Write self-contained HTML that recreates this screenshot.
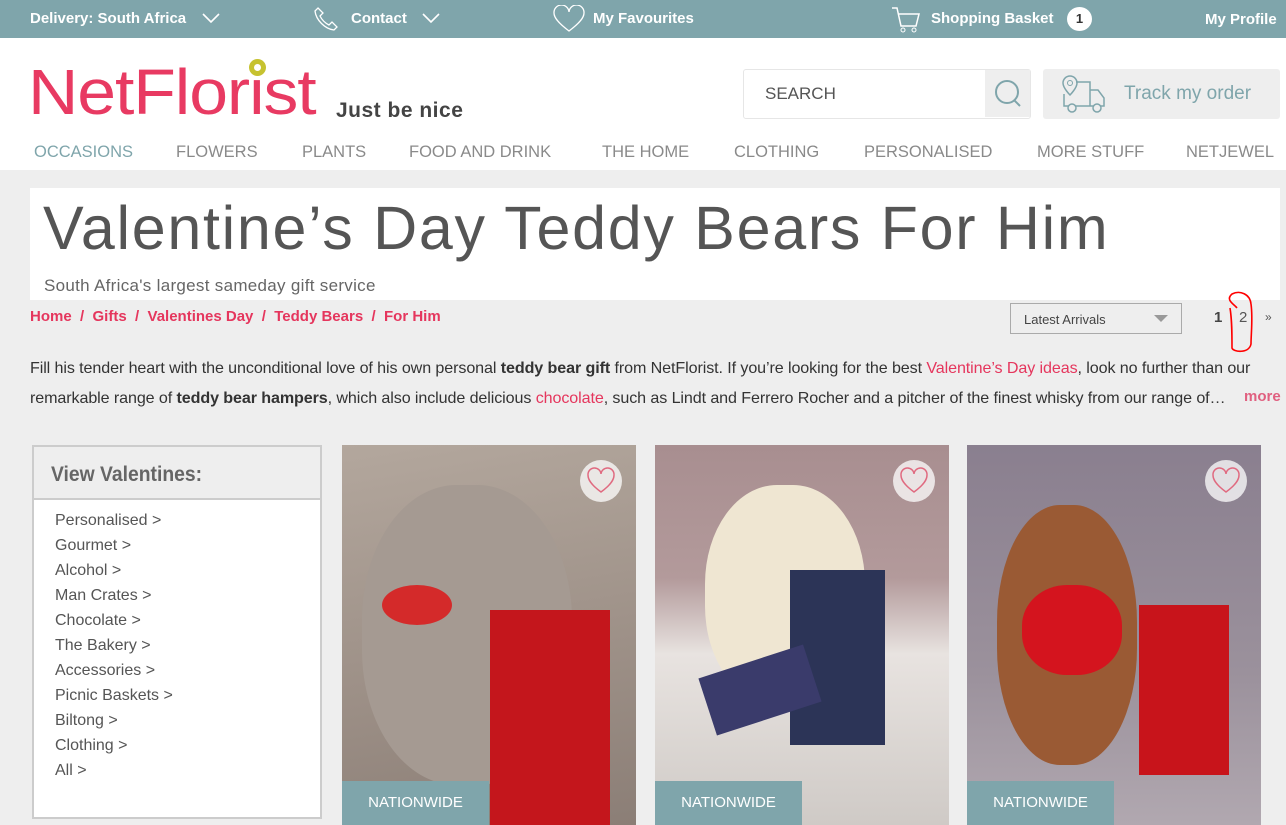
<!DOCTYPE html>
<html><head><meta charset="utf-8"><style>
*{margin:0;padding:0;box-sizing:border-box}
body{width:1286px;height:825px;overflow:hidden;background:#eeeeee;font-family:"Liberation Sans",sans-serif;position:relative}
.abs{position:absolute}
.top{left:0;top:0;width:1286px;height:38px;background:#7fa5ab;color:#fff;font-weight:bold;font-size:15px}
.top span{position:absolute;top:10px}
.hdr{left:0;top:38px;width:1286px;height:132px;background:#fff}
.nav{top:143px;font-size:16.5px;color:#8a8a8a}
.p{font-size:16.1px;color:#333;line-height:30px;letter-spacing:-0.1px}
.p b{color:#333}
.pk{color:#e5365d}
.side a{display:block;color:#555;font-size:16px;height:25px}
.card{top:445px;width:294px;height:380px;overflow:hidden}
.nw{position:absolute;left:0;bottom:0;width:147px;height:44px;background:#7fa5ab;color:#fff;font-size:15px;text-align:center;line-height:44px}
.hrt{position:absolute;top:15px;right:14px;width:42px;height:42px;border-radius:50%;background:rgba(255,255,255,.75)}
.hrt svg{position:absolute;left:6px;top:7px}
</style></head><body>
<div class="abs top">
<span style="left:30px">Delivery: South Africa</span>
<svg class="abs" style="left:202px;top:12px" width="18" height="12"><path d="M1 2l8 8 8-8" stroke="#fff" stroke-width="1.6" fill="none"/></svg>
<svg class="abs" style="left:312px;top:5px" width="28" height="28"><path d="M6 3l5 5-3 3c2 4 5 7 9 9l3-3 5 5-3 3C13 24 4 15 3 6z" stroke="#fff" stroke-width="1.3" fill="none"/></svg>
<span style="left:351px">Contact</span>
<svg class="abs" style="left:422px;top:12px" width="18" height="12"><path d="M1 2l8 8 8-8" stroke="#fff" stroke-width="1.6" fill="none"/></svg>
<svg class="abs" style="left:552px;top:5px" width="34" height="28"><path d="M17 26C5 17 2 12 2 8a7 7 0 0 1 15-1 7 7 0 0 1 15 1c0 4-3 9-15 18z" stroke="#fff" stroke-width="1.3" fill="none"/></svg>
<span style="left:593px">My Favourites</span>
<svg class="abs" style="left:890px;top:5px" width="32" height="30"><path d="M2 3h5l4 18h15l3-12H9" stroke="#fff" stroke-width="1.5" fill="none"/><circle cx="13" cy="25" r="2" stroke="#fff" fill="none"/><circle cx="24" cy="25" r="2" stroke="#fff" fill="none"/></svg>
<span style="left:931px">Shopping Basket</span>
<div class="abs" style="left:1067px;top:7px;width:25px;height:24px;border-radius:50%;background:#fff;color:#333;font-size:13px;text-align:center;line-height:24px">1</div>
<span style="left:1205px;top:11px">My Profile</span>
</div>
<div class="abs hdr"></div>
<div class="abs" style="left:28px;top:52px;font-size:64px;color:#e83a62;letter-spacing:-1px;line-height:80px;transform:scaleX(1.09);transform-origin:left">NetFlorist</div>
<div class="abs" style="left:249px;top:59px;width:17px;height:17px;border-radius:50%;background:#c6c230"></div>
<div class="abs" style="left:254px;top:64px;width:7px;height:7px;border-radius:50%;background:#fff"></div>
<div class="abs" style="left:336px;top:99px;font-size:21px;color:#444;font-weight:bold;letter-spacing:0.5px">Just be nice</div>
<div class="abs" style="left:743px;top:69px;width:288px;height:50px;border:1px solid #e6e6e6;border-radius:3px;background:#fff"></div>
<div class="abs" style="left:765px;top:84px;font-size:17px;color:#555">SEARCH</div>
<div class="abs" style="left:985px;top:70px;width:45px;height:47px;background:#eee"></div>
<svg class="abs" style="left:993px;top:78px" width="32" height="32"><circle cx="14" cy="14" r="11" stroke="#7fa5ab" stroke-width="2" fill="none"/><path d="M21 22l6 6" stroke="#7fa5ab" stroke-width="2"/></svg>
<div class="abs" style="left:1043px;top:69px;width:237px;height:50px;background:#eeeeee;border-radius:3px"></div>
<svg class="abs" style="left:1060px;top:74px" width="52" height="40"><path d="M10 2a7 7 0 0 1 7 7c0 5-7 12-7 12S3 14 3 9a7 7 0 0 1 7-7z" stroke="#7fa5ab" stroke-width="1.5" fill="none"/><circle cx="10" cy="9" r="2.5" stroke="#7fa5ab" fill="none"/><path d="M16 8h14v24H4V20M30 16h8l6 8v8h-14" stroke="#7fa5ab" stroke-width="1.5" fill="none"/><circle cx="12" cy="34" r="4" fill="#eee" stroke="#7fa5ab" stroke-width="1.5"/><circle cx="37" cy="34" r="4" fill="#eee" stroke="#7fa5ab" stroke-width="1.5"/></svg>
<div class="abs" style="left:1124px;top:83px;font-size:19px;color:#7fa5ab">Track my order</div>
<div class="abs nav" style="left:34px;color:#7fa5ab">OCCASIONS</div>
<div class="abs nav" style="left:176px">FLOWERS</div>
<div class="abs nav" style="left:302px">PLANTS</div>
<div class="abs nav" style="left:409px">FOOD AND DRINK</div>
<div class="abs nav" style="left:602px">THE HOME</div>
<div class="abs nav" style="left:734px">CLOTHING</div>
<div class="abs nav" style="left:864px">PERSONALISED</div>
<div class="abs nav" style="left:1037px">MORE STUFF</div>
<div class="abs nav" style="left:1186px">NETJEWEL</div>

<div class="abs" style="left:30px;top:188px;width:1250px;height:112px;background:#fff"></div>
<div class="abs" style="left:43px;top:193px;font-size:61px;color:#555;letter-spacing:1.7px">Valentine’s Day Teddy Bears For Him</div>
<div class="abs" style="left:44px;top:276px;font-size:17px;color:#666;letter-spacing:0.3px">South Africa's largest sameday gift service</div>

<div class="abs" style="left:30px;top:308px;font-size:15px;color:#e5365d;font-weight:bold">Home &nbsp;/&nbsp; Gifts &nbsp;/&nbsp; Valentines Day &nbsp;/&nbsp; Teddy Bears &nbsp;/&nbsp; For Him</div>
<div class="abs" style="left:1010px;top:303px;width:172px;height:31px;border:1px solid #aaa;background:#eee;font-size:13px;color:#444;padding:8px 13px">Latest Arrivals</div>
<div class="abs" style="left:1154px;top:315px;border-left:7px solid transparent;border-right:7px solid transparent;border-top:7px solid #999"></div>
<div class="abs" style="left:1214px;top:309px;font-size:15px;color:#444;font-weight:bold">1</div>
<div class="abs" style="left:1239px;top:309px;font-size:15px;color:#555">2</div>
<div class="abs" style="left:1265px;top:310px;font-size:12px;color:#555">»</div>
<svg class="abs" style="left:1215px;top:275px" width="50" height="85"><path d="M22 33c-3-4-12-8-5-14 8-4 18 0 19 10 2 14 0 30 0 40-2 10-18 8-19 4 0-14 0-28-2-40" stroke="#f00" stroke-width="1.6" fill="none"/></svg>

<div class="abs p" style="left:30px;top:353px;width:1256px;white-space:nowrap">Fill his tender heart with the unconditional love of his own personal <b>teddy bear gift</b> from NetFlorist. If you’re looking for the best <span class="pk">Valentine’s Day ideas</span>, look no further than our<br>remarkable range of <b>teddy bear hampers</b>, which also include delicious <span class="pk">chocolate</span>, such as Lindt and Ferrero Rocher and a pitcher of the finest whisky from our range of…</div>
<div class="abs" style="left:1240px;top:388px;font-size:15px;color:#e06080;font-weight:bold;background:#eee;padding-left:4px">more</div>

<div class="abs" style="left:32px;top:445px;width:290px;height:374px;border:2px solid #ccc;background:#fff"></div>
<div class="abs" style="left:34px;top:447px;width:286px;height:53px;background:#eee;border-bottom:2px solid #ccc"></div>
<div class="abs" style="left:51px;top:463px;font-size:21px;color:#666;font-weight:bold;transform:scaleX(.92);transform-origin:left">View Valentines:</div>
<div class="abs side" style="left:55px;top:512px">
<a>Personalised &gt;</a><a>Gourmet &gt;</a><a>Alcohol &gt;</a><a>Man Crates &gt;</a><a>Chocolate &gt;</a><a>The Bakery &gt;</a><a>Accessories &gt;</a><a>Picnic Baskets &gt;</a><a>Biltong &gt;</a><a>Clothing &gt;</a><a>All &gt;</a></div>

<div class="abs card" style="left:342px;background:linear-gradient(170deg,#b3a79d,#9c8f86 60%,#8b7e76)">
<div class="abs" style="left:20px;top:40px;width:210px;height:300px;border-radius:45%;background:#a59a92"></div>
<div class="abs" style="left:148px;top:165px;width:120px;height:215px;background:#c4161c"></div>
<div class="abs" style="left:40px;top:140px;width:70px;height:40px;border-radius:50%;background:#d42a2a"></div>
<div class="hrt"><svg width="30" height="28"><path d="M15 25C4 17 2 12 2 8a6.5 6.5 0 0 1 13-1 6.5 6.5 0 0 1 13 1c0 4-2 9-13 17z" stroke="#e06a80" stroke-width="1.5" fill="none"/></svg></div><div class="nw">NATIONWIDE</div></div>
<div class="abs card" style="left:655px;background:linear-gradient(180deg,#a88e90 0,#b39a9b 35%,#e8e3e0 55%,#cfcac6 100%)">
<div class="abs" style="left:50px;top:40px;width:160px;height:220px;border-radius:45%;background:#efe6d2"></div>
<div class="abs" style="left:135px;top:125px;width:95px;height:175px;background:#2c3457"></div>
<div class="abs" style="left:50px;top:215px;width:110px;height:60px;background:#3a3b6b;transform:rotate(-18deg)"></div>
<div class="hrt"><svg width="30" height="28"><path d="M15 25C4 17 2 12 2 8a6.5 6.5 0 0 1 13-1 6.5 6.5 0 0 1 13 1c0 4-2 9-13 17z" stroke="#e06a80" stroke-width="1.5" fill="none"/></svg></div><div class="nw">NATIONWIDE</div></div>
<div class="abs card" style="left:967px;background:linear-gradient(180deg,#8a7f8f,#9b919c 60%,#b1a8b0)">
<div class="abs" style="left:30px;top:60px;width:140px;height:260px;border-radius:45%;background:#9a5a34"></div>
<div class="abs" style="left:55px;top:140px;width:100px;height:90px;border-radius:45%;background:#d4141e"></div>
<div class="abs" style="left:172px;top:160px;width:90px;height:170px;background:#c8141b"></div>
<div class="hrt"><svg width="30" height="28"><path d="M15 25C4 17 2 12 2 8a6.5 6.5 0 0 1 13-1 6.5 6.5 0 0 1 13 1c0 4-2 9-13 17z" stroke="#e06a80" stroke-width="1.5" fill="none"/></svg></div><div class="nw">NATIONWIDE</div></div>
</body></html>
